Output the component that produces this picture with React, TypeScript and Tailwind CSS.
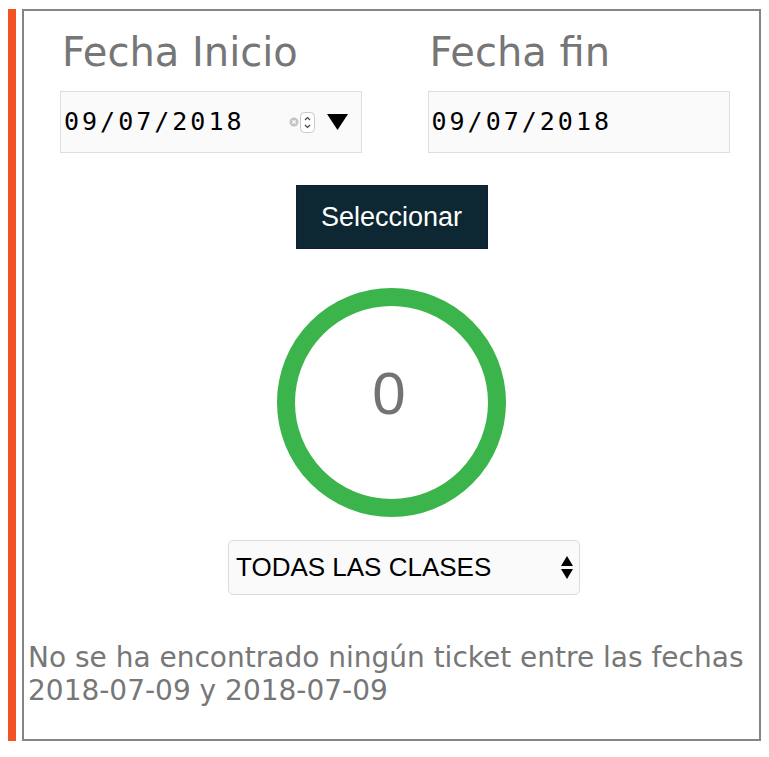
export default function App() {
  return (
    <div className="min-h-screen bg-white px-2 pt-[9px] font-['DejaVu_Sans',sans-serif]">
      <div className="flex h-[732px]">
        {/* orange side stripe */}
        <div className="w-2 bg-[#f25224]" />

        <div className="ml-[6px] flex flex-1 flex-col border-2 border-[#858585]">
          {/* date pickers */}
          <div className="grid grid-cols-2 pt-[18px]">
            <DateField label="Fecha Inicio" value="09/07/2018" controls />
            <DateField label="Fecha fin" value="09/07/2018" />
          </div>

          <button className="mx-auto mt-[32px] h-[64px] w-[192px] border border-[#141c40] bg-[#0e2833] font-['Liberation_Sans',Arial,sans-serif] text-[27px] text-white">
            Seleccionar
          </button>

          {/* counter ring */}
          <div className="mx-auto mt-[39px] flex h-[229px] w-[229px] items-center justify-center rounded-full border-[18px] border-[#3bb54b]">
            <span className="mb-[19px] mr-[5px] font-['Liberation_Sans',Arial,sans-serif] text-[60px] leading-[69px] text-[#737373]">
              0
            </span>
          </div>

          {/* class filter */}
          <div className="ml-[204px] mt-[23px] flex h-[55px] w-[352px] items-center justify-between rounded-[5px] border border-[#dcdcdc] bg-[#fafafa] pl-[7px] pr-[5px]">
            <span className="font-['Liberation_Sans',Arial,sans-serif] text-[26px] text-black">
              TODAS LAS CLASES
            </span>
            <svg width="14" height="26" viewBox="0 0 14 26">
              <path d="M7 1 L13 11 L1 11 Z" fill="#000" />
              <path d="M1 14 L13 14 L7 24 Z" fill="#000" />
            </svg>
          </div>

          <p className="mt-[46px] pl-1 text-[28px] leading-[33px] text-[#777]">
            No se ha encontrado ningún ticket entre las fechas 2018-07-09 y 2018-07-09
          </p>
        </div>
      </div>
    </div>
  );
}

function DateField({
  label,
  value,
  controls,
}: {
  label: string;
  value: string;
  controls?: boolean;
}) {
  return (
    <div className="pl-9">
      <div className="pl-[2px] text-[40px] leading-[47px] text-[#767676]">{label}</div>
      <div className="mt-[15px] flex h-[62px] w-[302px] items-center border border-[#dedede] bg-[#fafafa] pl-[3px]">
        <span className="font-['DejaVu_Sans_Mono',monospace] text-[25px] tracking-[3px] text-black">
          {value}
        </span>
        {controls && (
          <div className="ml-auto mr-[13px] flex items-center">
            {/* clear button */}
            <svg width="10" height="10" viewBox="0 0 10 10">
              <circle cx="5" cy="5" r="4.5" fill="#c4c4c4" />
              <path d="M3.3 3.3 L6.7 6.7 M6.7 3.3 L3.3 6.7" stroke="#fff" strokeWidth="1.2" />
            </svg>
            {/* spinner */}
            <svg width="15" height="21" viewBox="0 0 15 21" className="ml-[1px]">
              <rect x="0.5" y="0.5" width="14" height="20" rx="4" fill="#fff" stroke="#c8c8c8" />
              <path d="M5 8 L7.5 5.5 L10 8" fill="none" stroke="#444" strokeWidth="1.2" />
              <path d="M5 13 L7.5 15.5 L10 13" fill="none" stroke="#444" strokeWidth="1.2" />
            </svg>
            <svg width="21" height="16" viewBox="0 0 21 16" className="ml-[12px]">
              <path d="M0 0 L21 0 L10.5 16 Z" fill="#000" />
            </svg>
          </div>
        )}
      </div>
    </div>
  );
}
